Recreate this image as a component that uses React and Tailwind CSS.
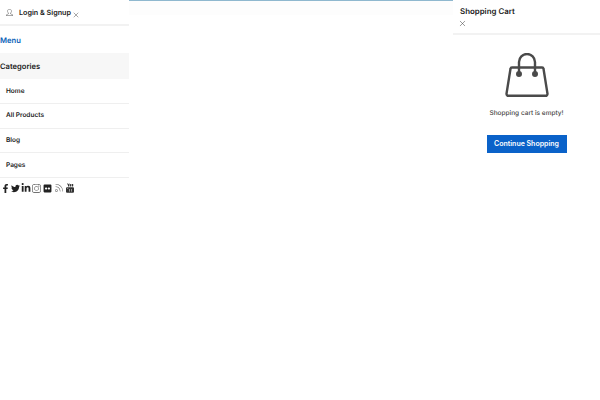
import { FaFacebookF, FaTwitter, FaLinkedinIn, FaFlickr } from "react-icons/fa";
import { SlSocialInstagram, SlFeed, SlUser } from "react-icons/sl";
import { LuX } from "react-icons/lu";

const categories = ["Home", "All Products", "Blog", "Pages"];

const BagIcon = () => (
  <svg width="44" height="44" viewBox="0 0 44 44" fill="none" stroke="#4a4a4a" strokeWidth="2.4">
    <path d="M7 14.5h30a1.5 1.5 0 0 1 1.5 1.3l4 25a2.2 2.2 0 0 1-2.2 2H3.7a2.2 2.2 0 0 1-2.2-2l4-25A1.5 1.5 0 0 1 7 14.5z" />
    <path d="M14 21V9a8 8 0 0 1 16 0v12" />
    <circle cx="14" cy="21" r="1.8" fill="#4a4a4a" />
    <circle cx="30" cy="21" r="1.8" fill="#4a4a4a" />
  </svg>
);

const YoutubeIcon = () => (
  <svg width="8" height="10" viewBox="0 0 8 10" fill="#333">
    <path d="M1 0.5h1l.5 1 .5-1h.6L3 2.2V3.4H2V2.2z" />
    <rect x="3.6" y="1" width="1.4" height="2.4" rx=".5" />
    <rect x="5.6" y="1" width="1.6" height="2.4" rx=".4" />
    <path d="M1 4.2h6a1 1 0 0 1 1 1v3.6a1 1 0 0 1-1 1H1a1 1 0 0 1-1-1V5.2a1 1 0 0 1 1-1z" />
    <rect x="1.2" y="5" width="1" height=".5" fill="#fff" />
    <rect x="3" y="6" width=".5" height="2.6" fill="#fff" />
    <rect x="5" y="6" width=".5" height="2.6" fill="#fff" />
  </svg>
);

const App = () => {
  return (
    <div className="flex h-[400px] w-[600px] overflow-hidden bg-white text-[#222] opacity-[.999] [text-rendering:geometricPrecision] font-['Inter','Liberation_Sans',sans-serif]">
      {/* mobile menu */}
      <div className="w-[129px] shrink-0">
        <div className="flex h-[26px] items-center border-b-2 border-[#f2f2f2] pl-[6px]">
          <SlUser className="text-[#555]" size={7} />
          <span className="ml-[6px] w-[53px] pt-[1px] text-[7.2px] font-semibold leading-none whitespace-nowrap">Login &amp; Signup</span>
          <LuX className="mt-[5px] text-[#444]" size={8} strokeWidth={1.4} />
        </div>
        <div className="flex h-[27px] items-center pt-[2px] text-[7.6px] font-semibold text-[#0a62b8]">Menu</div>
        <div className="flex h-[26px] items-center bg-[#f7f7f7] pt-[1px] text-[7.6px] font-semibold">Categories</div>
        <ul>
          {categories.map((item) => (
            <li key={item} className="flex h-[24.75px] items-center border-b border-[#efefef] pl-[6px] pt-[1px] text-[6.5px] font-semibold">
              {item}
            </li>
          ))}
        </ul>
        <div className="mt-[5px] flex items-center pl-[1px] text-[#222]">
          <FaFacebookF size={9} />
          <FaTwitter className="ml-[1px]" size={9} />
          <FaLinkedinIn className="ml-[1px]" size={10} />
          <SlSocialInstagram className="ml-[1px] text-[#444]" size={9} />
          <FaFlickr className="ml-[2px]" size={9} />
          <SlFeed className="ml-[3px] text-[#555]" size={8} />
          <span className="ml-[3px]"><YoutubeIcon /></span>
        </div>
      </div>

      {/* page behind the drawers */}
      <div className="flex-1">
        <div className="h-[1px] bg-[#8fb8cf]" />
        <div className="h-[14px] bg-[#fdfdfd]" />
      </div>

      {/* cart drawer */}
      <div className="w-[147px] shrink-0">
        <div className="h-[35px] border-b-2 border-[#f2f2f2] pl-[7px] pt-[6px]">
          <div className="text-[7.9px] font-semibold leading-[11px]">Shopping Cart</div>
          <LuX className="mt-[2px] -ml-[2px] text-[#444]" size={9} strokeWidth={1.4} />
        </div>
        <div className="flex flex-col items-center pt-[18px]">
          <BagIcon />
          <p className="mt-[11px] text-[6.5px] font-medium leading-[10px] text-[#444]">Shopping cart is empty!</p>
          <button className="mt-[17px] h-[18px] w-[80px] bg-[#0a62c9] text-[7px] font-semibold text-white">
            Continue Shopping
          </button>
        </div>
      </div>
    </div>
  );
};

export default App;
